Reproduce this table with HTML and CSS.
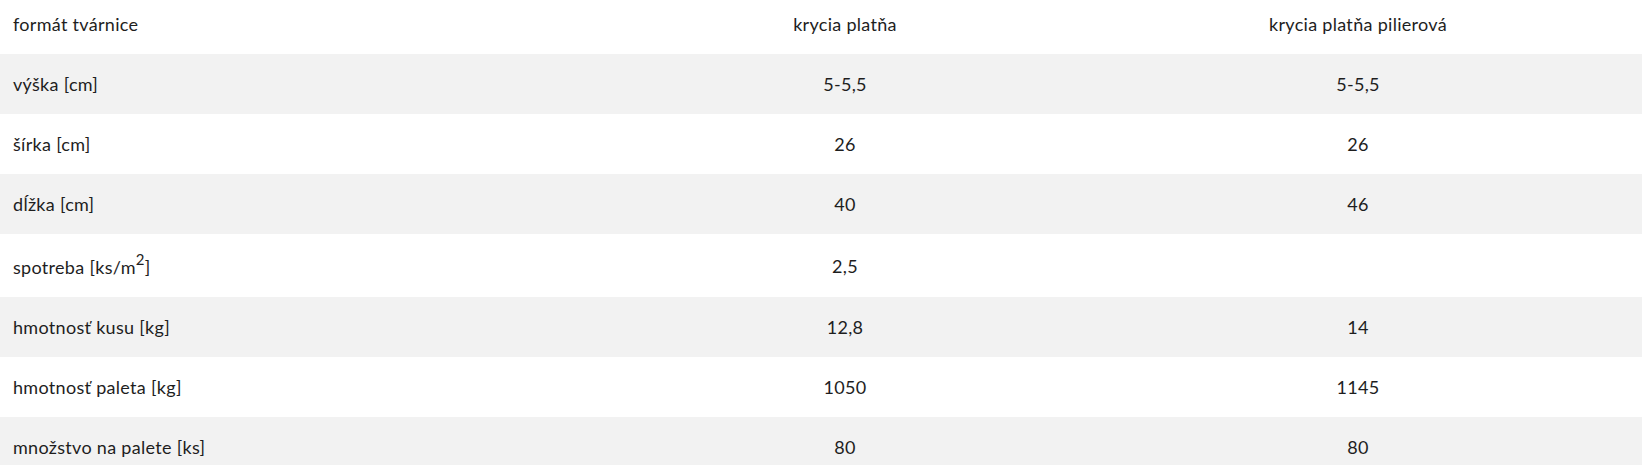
FILE: index.html
```html
<!DOCTYPE html>
<html lang="sk">
<head>
<meta charset="utf-8">
<title>Tabuľka</title>
<link rel="stylesheet" href="styles.css">
</head>
<body>
<table class="spec">
  <colgroup>
    <col class="c1">
    <col class="c2">
    <col class="c3">
  </colgroup>
  <thead>
    <tr class="head">
      <td>formát tvárnice</td>
      <td>krycia platňa</td>
      <td>krycia platňa pilierová</td>
    </tr>
  </thead>
  <tbody>
    <tr class="alt"><td>výška [cm]</td><td>5-5,5</td><td>5-5,5</td></tr>
    <tr><td>šírka [cm]</td><td>26</td><td>26</td></tr>
    <tr class="alt"><td>dĺžka [cm]</td><td>40</td><td>46</td></tr>
    <tr><td>spotreba [ks/m<sup>2</sup>]</td><td>2,5</td><td></td></tr>
    <tr class="alt"><td>hmotnosť kusu [kg]</td><td>12,8</td><td>14</td></tr>
    <tr><td>hmotnosť paleta [kg]</td><td>1050</td><td>1145</td></tr>
    <tr class="alt"><td>množstvo na palete [ks]</td><td>80</td><td>80</td></tr>
  </tbody>
</table>
</body>
</html>
```
FILE: styles.css
```css
html, body {
  margin: 0;
  padding: 0;
  background: #ffffff;
}

body {
  font-family: "Lato", "Noto Sans", sans-serif;
  font-size: 18px;
  letter-spacing: 0.3px;
  color: #1e1e1e;
}

.spec {
  width: 100%;
  border-collapse: collapse;
  table-layout: fixed;
}

.c1 { width: 616px; }
.c2 { width: 458px; }

.spec td {
  padding: 18px 13px;
  line-height: 24px;
  text-align: center;
  vertical-align: middle;
}

.spec td:first-child {
  text-align: left;
}

.head td {
  padding-top: 12px;
}

.alt td {
  background: #f2f2f2;
}

.spec sup {
  font-size: 15px;
  line-height: 1;
  vertical-align: 9px;
}
```
